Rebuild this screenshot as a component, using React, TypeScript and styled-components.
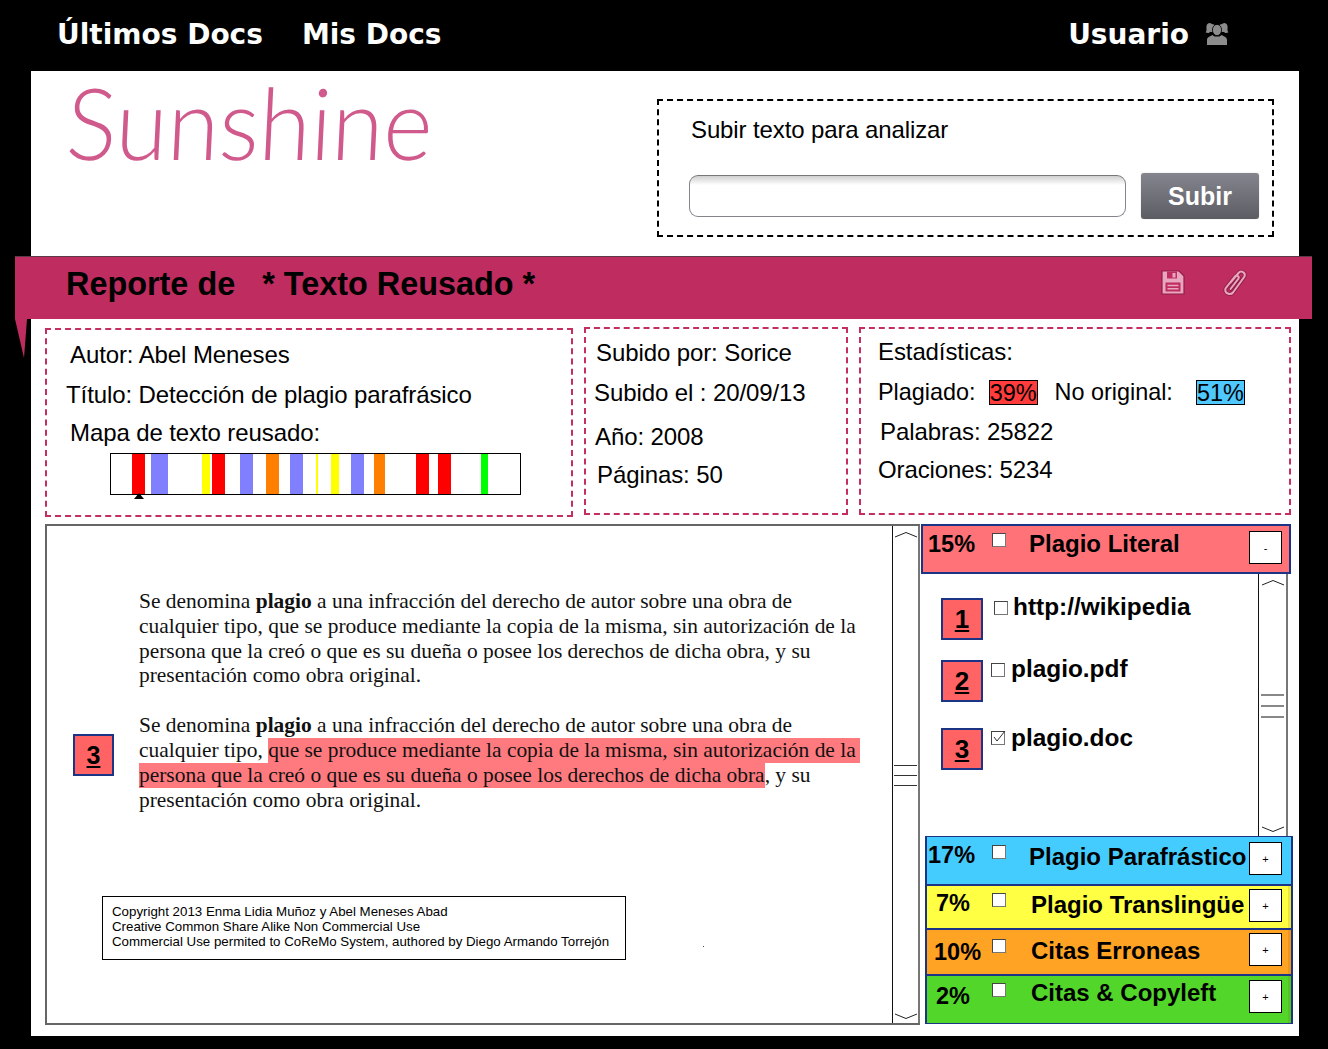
import React from "react"
import styled, { createGlobalStyle } from "styled-components"

const GlobalStyle = createGlobalStyle`
  html, body {
    margin: 0;
    padding: 0;
    background: #000;
  }
  body {
    font-family: "Liberation Sans", Arial, sans-serif;
    color: #000;
  }
`

const mapSegments = [
  { color: "#ff0000", from: 132, to: 145 },
  { color: "#8080ff", from: 151, to: 168 },
  { color: "#ffff00", from: 202, to: 210 },
  { color: "#ff0000", from: 212, to: 225 },
  { color: "#8080ff", from: 240, to: 253 },
  { color: "#ff8000", from: 266, to: 279 },
  { color: "#8080ff", from: 290, to: 303 },
  { color: "#ffff00", from: 316, to: 318 },
  { color: "#ffff00", from: 331, to: 339 },
  { color: "#8080ff", from: 351, to: 364 },
  { color: "#ff8000", from: 374, to: 385 },
  { color: "#ff0000", from: 416, to: 429 },
  { color: "#ff0000", from: 438, to: 451 },
  { color: "#00ff00", from: 481, to: 488 },
]

const sources = [
  { id: 1, name: "http://wikipedia", checked: false, after: 20, checkLeft: 11, textLeft: 5, textTop: -5 },
  { id: 2, name: "plagio.pdf", checked: false, after: 26, checkLeft: 8, textLeft: 6, textTop: -5 },
  { id: 3, name: "plagio.doc", checked: true, after: 0, checkLeft: 8, textLeft: 6, textTop: -4 },
]

const categories = [
  { pct: "17%", title: "Plagio Parafrástico", bg: "#45ccff", h: 49, pctLeft: 0, pctTop: 3, checkTop: 8, titleLeft: 0, titleTop: 5, btnTop: 5, strip: false },
  { pct: "7%", title: "Plagio Translingüe", bg: "#ffff44", h: 44, pctLeft: 8, pctTop: 2, checkTop: 7, titleLeft: 2, titleTop: 4, btnTop: 3, strip: true },
  { pct: "10%", title: "Citas Erroneas", bg: "#ffa324", h: 46, pctLeft: 6, pctTop: 7, checkTop: 9, titleLeft: 2, titleTop: 6, btnTop: 3, strip: true },
  { pct: "2%", title: "Citas & Copyleft", bg: "#52d62a", h: 49, pctLeft: 8, pctTop: 5, checkTop: 7, titleLeft: 2, titleTop: 2, btnTop: 4, strip: true },
]

const UsersIcon = () => (
  <svg width="24" height="24" viewBox="0 0 24 24" fill="#8c8c8c">
    <path d="M5 1c-2 0-3.600 1.600-3.600 4 0 2.300.6 4-.9 5.300 1 .7 2.200.8 3.300.7L6 9l1-7z" />
    <path d="M19 1c2 0 3.600 1.600 3.600 4 0 2.300-.6 4 .9 5.300-1 .7-2.200.8-3.300.7L18 9l-1-7z" />
    <circle cx="6.500" cy="6" r="4" />
    <circle cx="17.500" cy="6" r="4" />
    <ellipse cx="12" cy="8" rx="4.600" ry="5.600" stroke="#000" strokeWidth=".8" />
    <path d="M2 18c0-3 3-3.500 5.500-5l2 1.500h5l2-1.500c2.500 1.500 5.500 2 5.500 5v5H2z" />
  </svg>
)

const SaveIcon = () => (
  <svg width="24" height="25" viewBox="0 0 24 25">
    <path d="M1 1h17l5 5v18H1z" fill="#eaa6bf" stroke="#8f1f48" strokeWidth="1.200" />
    <path d="M6 1.500h10v7H6z" fill="#bf2c5f" />
    <path d="M11.500 3h3v4.500h-3z" fill="#eaa6bf" />
    <path d="M4.500 12.500h15v9h-15z" fill="#bf2c5f" />
    <path d="M6.500 15.500h11M6.500 18.800h11" stroke="#eaa6bf" strokeWidth="1.500" />
  </svg>
)

const clipPath = "M8.500 13.500l8-9.500c2.500-3 7.500-.5 6 3.500L11 23.500c-2.500 3-9 1-7.500-4L13 7.500c1.500-1.800 4.500-.5 3.500 2L8.500 20"

const ClipIcon = () => (
  <svg width="26" height="28" viewBox="0 0 26 28" fill="none">
    <path d={clipPath} stroke="#8f1f48" strokeWidth="3.800" strokeLinecap="round" />
    <path d={clipPath} stroke="#eaa6bf" strokeWidth="2" strokeLinecap="round" />
  </svg>
)

const Chevron = ({ down }: { down?: boolean }) => (
  <ChevronSvg viewBox="0 0 24 7" width="24" height="7">
    <path d={down ? "M1 1l11 4.500L23 1" : "M1 6l11-4.500L23 6"} fill="none" stroke="#222" strokeWidth="1" />
  </ChevronSvg>
)

const Scrollbar = ({ $width, $light }: { $width: number; $light?: boolean }) => (
  <ScrollTrack $width={$width}>
    <Chevron />
    <Grip $light={$light}>
      <i />
      <i />
      <i />
    </Grip>
    <Chevron down />
  </ScrollTrack>
)

const CheckBox = ({ checked, $left, $top }: { checked?: boolean; $left: number; $top: number }) => (
  <Check $left={$left} $top={$top}>
    {checked && (
      <svg width="16" height="16" viewBox="0 0 16 16">
        <path d="M3 7l3 4 8-10" fill="none" stroke="#333" strokeWidth="1" />
      </svg>
    )}
  </Check>
)

const App = () => {
  let lastEnd = 110

  return (
    <Page>
      <GlobalStyle />
      <TopNav>
        <NavLink>Últimos Docs</NavLink>
        <NavLink>Mis Docs</NavLink>
        <UserBox>
          <NavLink>Usuario</NavLink>
          <UsersIcon />
        </UserBox>
      </TopNav>

      <Main>
        <Header>
          <Logo>Sunshine</Logo>
          <UploadBox>
            <UploadTitle>Subir texto para analizar</UploadTitle>
            <UploadRow>
              <UploadInput />
              <UploadButton>Subir</UploadButton>
            </UploadRow>
          </UploadBox>
        </Header>

        <Banner>
          <BannerTitle>Reporte de&nbsp;&nbsp; * Texto Reusado *</BannerTitle>
          <BannerIcons>
            <SaveIcon />
            <ClipIcon />
          </BannerIcons>
          <BannerTail />
        </Banner>

        <MetaRow>
          <MetaBox $width={528} $height={189} $top={1}>
            <MetaLine $x={23} $top={11}>Autor: Abel Meneses</MetaLine>
            <MetaLine $x={19} $top={12}>Título: Detección de plagio parafrásico</MetaLine>
            <MetaLine $x={23} $top={10}>Mapa de texto reusado:</MetaLine>
            <ReuseMap>
              {mapSegments.map((seg) => {
                const gap = seg.from - lastEnd - (lastEnd === 110 ? 1 : 0)
                lastEnd = seg.to
                return <MapSegment key={seg.from} $color={seg.color} $gap={gap} $width={seg.to - seg.from} />
              })}
              <MapPointer />
            </ReuseMap>
          </MetaBox>

          <MetaBox $width={264} $height={188}>
            <MetaLine $x={10} $top={10}>Subido por: Sorice</MetaLine>
            <MetaLine $x={8} $top={12}>Subido el : 20/09/13</MetaLine>
            <MetaLine $x={9} $top={16}>Año: 2008</MetaLine>
            <MetaLine $x={11} $top={10}>Páginas: 50</MetaLine>
          </MetaBox>

          <MetaBox $width={432} $height={188}>
            <MetaLine $x={17} $top={9}>Estadísticas:</MetaLine>
            <StatRow>
              <span>Plagiado:</span>
              <StatChip $bg="#ff3b3b" $left={13}>39%</StatChip>
              <StatLabel>No original:</StatLabel>
              <StatChip $bg="#4fc8ff" $left={23}>51%</StatChip>
            </StatRow>
            <MetaLine $x={19} $top={12}>Palabras: 25822</MetaLine>
            <MetaLine $x={17} $top={10}>Oraciones: 5234</MetaLine>
          </MetaBox>
        </MetaRow>

        <Work>
          <DocPanel>
            <DocBody>
              <ParaRow>
                <Gutter />
                <Paragraph>
                  <div>Se denomina <b>plagio</b> a una infracción del derecho de autor sobre una obra de</div>
                  <div>cualquier tipo, que se produce mediante la copia de la misma, sin autorización de la</div>
                  <div>persona que la creó o que es su dueña o posee los derechos de dicha obra, y su</div>
                  <div>presentación como obra original.</div>
                </Paragraph>
              </ParaRow>
              <ParaRow $top={25}>
                <Gutter>
                  <DocBadge>3</DocBadge>
                </Gutter>
                <Paragraph>
                  <div>Se denomina <b>plagio</b> a una infracción del derecho de autor sobre una obra de</div>
                  <div>cualquier tipo, <Mark $pad={4}>que se produce mediante la copia de la misma, sin autorización de la</Mark></div>
                  <div><Mark $pad={0}>persona que la creó o que es su dueña o posee los derechos de dicha obra</Mark>, y su</div>
                  <div>presentación como obra original.</div>
                </Paragraph>
              </ParaRow>
              <Copyright>
                <div>Copyright 2013 Enma Lidia Muñoz y Abel Meneses Abad</div>
                <div>Creative Common Share Alike Non Commercial Use</div>
                <div>Commercial Use permited to CoReMo System, authored by Diego Armando Torrejón</div>
              </Copyright>
              <Speck />
            </DocBody>
            <Scrollbar $width={28} />
          </DocPanel>

          <Sidebar>
            <LiteralHeader>
              <Pct $left={0} $top={3} $width={64}>15%</Pct>
              <CheckBox $left={0} $top={7} />
              <CatTitle $left={23} $top={3}>Plagio Literal</CatTitle>
              <CatButton $top={5}>-</CatButton>
            </LiteralHeader>
            <SourcePanel>
              <SourceList>
                {sources.map((src) => (
                  <SourceItem key={src.id} $after={src.after}>
                    <SourceBadge>{src.id}</SourceBadge>
                    <CheckBox checked={src.checked} $left={src.checkLeft} $top={3} />
                    <SourceName $left={src.textLeft} $top={src.textTop}>{src.name}</SourceName>
                  </SourceItem>
                ))}
              </SourceList>
              <Scrollbar $width={30} $light />
            </SourcePanel>
            <CategoryGroup>
              {categories.map((cat) => (
                <CategoryRow key={cat.pct} $bg={cat.bg} $height={cat.h} $strip={cat.strip}>
                  <Pct $left={cat.pctLeft} $top={cat.pctTop} $width={64}>{cat.pct}</Pct>
                  <CheckBox $left={0} $top={cat.checkTop} />
                  <CatTitle $left={23 + cat.titleLeft} $top={cat.titleTop}>{cat.title}</CatTitle>
                  <CatButton $top={cat.btnTop}>+</CatButton>
                </CategoryRow>
              ))}
            </CategoryGroup>
          </Sidebar>
        </Work>
      </Main>
    </Page>
  )
}

export default App

const Page = styled.div`
  width: 1328px;
  height: 1049px;
  overflow: hidden;
  background: #000;
`

const TopNav = styled.nav`
  display: flex;
  align-items: center;
  gap: 39px;
  height: 71px;
  padding: 0 99px 3px 57px;
  box-sizing: border-box;
`

const NavLink = styled.a`
  font-family: "DejaVu Sans", sans-serif;
  font-weight: 700;
  font-size: 28px;
  color: #fff;
`

const UserBox = styled.div`
  display: flex;
  align-items: center;
  gap: 16px;
  margin-left: auto;
`

const Main = styled.main`
  width: 1268px;
  height: 965px;
  margin-left: 31px;
  background: #fff;
`

const Header = styled.header`
  display: flex;
  justify-content: space-between;
  height: 185px;
  padding: 0 25px 0 39px;
  box-sizing: border-box;
`

const Logo = styled.div`
  font-family: "Lato", sans-serif;
  font-weight: 300;
  font-size: 100px;
  line-height: 110px;
  height: 110px;
  margin: -5px 0 0 -3px;
  color: #d05a8c;
  transform: scaleX(0.94) skewX(-3deg);
  transform-origin: left center;
`

const UploadBox = styled.section`
  width: 617px;
  height: 138px;
  margin-top: 28px;
  box-sizing: border-box;
  border: 2px dashed #000;
  padding: 15px 13px 0 30px;
`

const UploadTitle = styled.div`
  font-size: 24px;
  line-height: 28px;
  letter-spacing: -0.12px;
  margin-left: 2px;
`

const UploadRow = styled.div`
  display: flex;
  align-items: center;
  gap: 15px;
  margin-top: 29px;
`

const UploadInput = styled.div`
  width: 437px;
  height: 42px;
  box-sizing: border-box;
  border: 1.500px solid #84848c;
  border-top-color: #777;
  border-radius: 9px;
  background: linear-gradient(#cfcfcf, #fff 9px);
`

const UploadButton = styled.button`
  width: 118px;
  height: 46px;
  border: none;
  border-radius: 3px;
  background: linear-gradient(#85858f, #5c5c63);
  box-shadow: 0 0 1px #999;
  color: #fff;
  font-family: "Liberation Sans", sans-serif;
  font-weight: 700;
  font-size: 25px;
`

const Banner = styled.section`
  position: relative;
  display: flex;
  align-items: center;
  justify-content: space-between;
  height: 63px;
  margin: 0 -13px 0 -16px;
  padding: 0 64px 0 51px;
  box-sizing: border-box;
  background: #bf2c5f;
  border-top: 1px solid #5a3a48;
`

const BannerTitle = styled.h1`
  margin: 0 0 8px;
  font-size: 32.400px;
  font-weight: 700;
  line-height: 40px;
  white-space: nowrap;
`

const BannerIcons = styled.div`
  display: flex;
  align-items: center;
  gap: 37px;
  margin-bottom: 11px;
`

const BannerTail = styled.div`
  position: absolute;
  left: 0;
  top: 62px;
  width: 12px;
  height: 39px;
  background: #bf2c5f;
  clip-path: polygon(0 0, 100% 0, 75% 100%);
`

const MetaRow = styled.div`
  display: flex;
  align-items: flex-start;
  gap: 11px;
  height: 205px;
  padding: 8px 0 0 14px;
  box-sizing: border-box;
`

const MetaBox = styled.section<{ $width: number; $height: number; $top?: number }>`
  width: ${(p) => p.$width}px;
  height: ${(p) => p.$height}px;
  margin-top: ${(p) => p.$top || 0}px;
  flex: none;
  box-sizing: border-box;
  border: 2px dashed #c42e62;
`

const MetaLine = styled.div<{ $x: number; $top: number }>`
  margin: ${(p) => p.$top}px 0 0 ${(p) => p.$x}px;
  font-size: 24px;
  line-height: 28px;
  letter-spacing: -0.1px;
  white-space: nowrap;
`

const StatRow = styled.div`
  display: flex;
  align-items: center;
  margin: 12px 0 0 17px;
  font-size: 23.400px;
  line-height: 28px;
`

const StatLabel = styled.span`
  margin-left: 17px;
`

const StatChip = styled.span<{ $bg: string; $left: number }>`
  width: 49px;
  height: 25px;
  margin-left: ${(p) => p.$left}px;
  box-sizing: border-box;
  border: 1px solid #000;
  background: ${(p) => p.$bg};
  line-height: 24px;
  text-align: center;
`

const ReuseMap = styled.div`
  position: relative;
  display: flex;
  width: 411px;
  height: 42px;
  margin: 6px 0 0 63px;
  box-sizing: border-box;
  border: 1px solid #000;
`

const MapSegment = styled.div<{ $color: string; $gap: number; $width: number }>`
  flex: none;
  width: ${(p) => p.$width}px;
  margin-left: ${(p) => p.$gap}px;
  background: ${(p) => p.$color};
`

const MapPointer = styled.div`
  position: absolute;
  left: 23px;
  bottom: -5px;
  width: 0;
  height: 0;
  border-left: 5px solid transparent;
  border-right: 5px solid transparent;
  border-bottom: 6px solid #000;
`

const Work = styled.div`
  display: flex;
  align-items: flex-start;
  margin-left: 14px;
`

const DocPanel = styled.section`
  display: flex;
  width: 875px;
  height: 501px;
  box-sizing: border-box;
  border: 2px solid #666;
  border-right: none;
`

const DocBody = styled.div`
  position: relative;
  flex: 1;
  padding-top: 63px;
`

const ParaRow = styled.div<{ $top?: number }>`
  display: flex;
  margin-top: ${(p) => p.$top || 0}px;
`

const Gutter = styled.div`
  flex: none;
  width: 92px;
  padding-left: 26px;
  box-sizing: border-box;
`

const Paragraph = styled.div`
  font-family: "Liberation Serif", serif;
  font-size: 21.450px;
  line-height: 24.800px;
  color: #111;
  white-space: nowrap;
`

const Mark = styled.span<{ $pad: number }>`
  display: inline-block;
  padding-right: ${(p) => p.$pad}px;
  background: #ff7a7e;
`

const Badge = styled.div`
  display: flex;
  align-items: center;
  justify-content: center;
  flex: none;
  width: 42px;
  height: 42px;
  box-sizing: border-box;
  border: 2px solid #1b3486;
  background: #ff6363;
  font-weight: 700;
  font-size: 26px;
  text-decoration: underline;
`

const DocBadge = styled(Badge)`
  width: 41px;
  margin-top: 21px;
  font-size: 25px;
`

const SourceBadge = styled(Badge)``

const Copyright = styled.div`
  width: 524px;
  height: 64px;
  margin: 84px 0 0 55px;
  padding: 7px 9px;
  box-sizing: border-box;
  border: 1px solid #000;
  font-size: 13.300px;
  line-height: 15px;
  white-space: nowrap;
`

const Speck = styled.div`
  position: absolute;
  left: 656px;
  top: 420px;
  width: 1px;
  height: 1px;
  background: #444;
`

const ScrollTrack = styled.div<{ $width: number }>`
  display: flex;
  flex-direction: column;
  align-items: center;
  justify-content: space-between;
  flex: none;
  width: ${(p) => p.$width}px;
  box-sizing: border-box;
  padding: 5px 0 3px;
  border-left: 1px solid #111;
  border-right: 2px solid #777;
  background: #fff;
`

const ChevronSvg = styled.svg`
  display: block;
`

const Grip = styled.div<{ $light?: boolean }>`
  display: flex;
  flex-direction: column;
  gap: 9px;

  i {
    display: block;
    width: 23px;
    height: ${(p) => (p.$light ? 2 : 1)}px;
    background: ${(p) => (p.$light ? "#888" : "#333")};
  }
`

const Sidebar = styled.aside`
  display: flex;
  flex-direction: column;
  width: 373px;
  height: 501px;
  position: relative;
`

const LiteralHeader = styled.div`
  display: flex;
  align-items: flex-start;
  width: 370px;
  height: 50px;
  margin-left: 1px;
  padding-left: 5px;
  box-sizing: border-box;
  border: 2px solid #1b3486;
  background: #ff7378;
`

const Pct = styled.div<{ $left: number; $top: number; $width: number }>`
  flex: none;
  width: ${(p) => p.$width - p.$left}px;
  margin-left: ${(p) => p.$left}px;
  margin-top: ${(p) => p.$top}px;
  font-weight: 700;
  font-size: 23.500px;
  line-height: 30px;
`

const Check = styled.span<{ $left: number; $top: number }>`
  position: relative;
  flex: none;
  width: 14px;
  height: 14px;
  margin-left: ${(p) => p.$left}px;
  margin-top: ${(p) => p.$top}px;
  box-sizing: border-box;
  border: 1px solid #444;
  border-right-color: #777;
  border-bottom-color: #777;
  background: #fff;

  svg {
    position: absolute;
    left: -1px;
    top: -2px;
  }
`

const CatTitle = styled.div<{ $left: number; $top: number }>`
  flex: none;
  width: ${(p) => 243 - p.$left}px;
  margin-left: ${(p) => p.$left}px;
  margin-top: ${(p) => p.$top}px;
  font-weight: 700;
  font-size: 24px;
  line-height: 30px;
  white-space: nowrap;
`

const CatButton = styled.div<{ $top: number }>`
  display: flex;
  align-items: center;
  justify-content: center;
  flex: none;
  width: 33px;
  height: 33px;
  margin-top: ${(p) => p.$top}px;
  box-sizing: border-box;
  border: 1px solid #000;
  background: #fff;
  font-size: 11px;
`

const SourcePanel = styled.div`
  display: flex;
  height: 262px;
  margin-left: 1px;
  width: 367px;
`

const SourceList = styled.div`
  flex: 1;
  padding: 24px 0 0 20px;
`

const SourceItem = styled.div<{ $after: number }>`
  display: flex;
  align-items: flex-start;
  margin-bottom: ${(p) => p.$after}px;
`

const SourceName = styled.div<{ $left: number; $top: number }>`
  margin-left: ${(p) => p.$left}px;
  margin-top: ${(p) => p.$top}px;
  font-weight: 700;
  font-size: 24.400px;
  line-height: 28px;
  white-space: nowrap;
`

const CategoryGroup = styled.div`
  display: flex;
  flex-direction: column;
  margin-left: 5px;
  width: 368px;
`

const CategoryRow = styled.div<{ $bg: string; $height: number; $strip: boolean }>`
  display: flex;
  align-items: flex-start;
  height: ${(p) => p.$height}px;
  padding-left: 1px;
  box-sizing: border-box;
  border: 2px solid #1b3486;
  border-top-width: 1.500px;
  border-bottom-width: 1.500px;
  background: ${(p) => p.$bg};
  box-shadow: ${(p) => (p.$strip ? "inset -3px 0 rgba(120, 90, 0, 0.15)" : "none")};
`
